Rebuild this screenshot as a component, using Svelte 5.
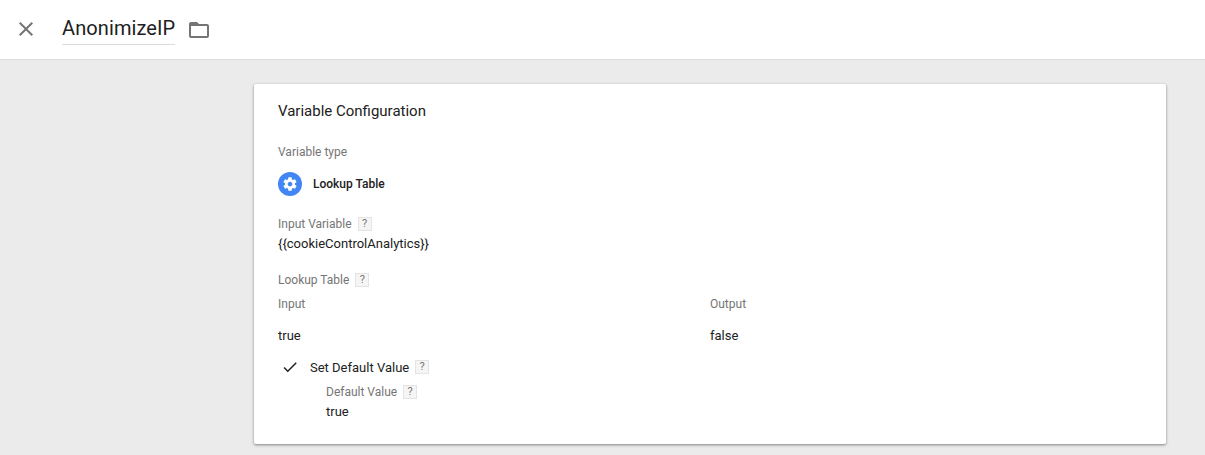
<script>
  const rows = [{ input: 'true', output: 'false' }];
</script>

<div class="page">
  <header class="bar">
    <svg class="close" width="24" height="24" viewBox="0 0 24 24"><path d="M19 6.41 17.59 5 12 10.59 6.41 5 5 6.41 10.59 12 5 17.59 6.41 19 12 13.41 17.59 19 19 17.59 13.41 12z" fill="#757575"/></svg>
    <h1 class="title">AnonimizeIP</h1>
    <svg class="folder" width="24" height="24" viewBox="0 0 24 24"><path d="M20 6h-8l-2-2H4c-1.1 0-1.99.9-1.99 2L2 18c0 1.1.9 2 2 2h16c1.1 0 2-.9 2-2V8c0-1.1-.9-2-2-2zm0 12H4V8h16v10z" fill="#757575"/></svg>
  </header>

  <main class="body">
    <section class="card">
      <h2 class="card-title">Variable Configuration</h2>

      <div class="label type-label">Variable type</div>
      <div class="type">
        <span class="type-icon">
          <svg width="16" height="16" viewBox="0 0 24 24"><path fill="#fff" d="M19.43 12.98c.04-.32.07-.64.07-.98s-.03-.66-.07-.98l2.11-1.65c.19-.15.24-.42.12-.64l-2-3.46c-.12-.22-.39-.3-.61-.22l-2.49 1c-.52-.4-1.08-.73-1.69-.98l-.38-2.65C14.46 2.18 14.25 2 14 2h-4c-.25 0-.46.18-.49.42l-.38 2.65c-.61.25-1.17.59-1.69.98l-2.49-1c-.23-.09-.49 0-.61.22l-2 3.46c-.13.22-.07.49.12.64l2.11 1.65c-.04.32-.07.65-.07.98s.03.66.07.98l-2.11 1.65c-.19.15-.24.42-.12.64l2 3.46c.12.22.39.3.61.22l2.49-1c.52.4 1.08.73 1.69.98l.38 2.65c.03.24.24.42.49.42h4c.25 0 .46-.18.49-.42l.38-2.65c.61-.25 1.17-.59 1.69-.98l2.49 1c.23.09.49 0 .61-.22l2-3.46c.12-.22.07-.49-.12-.64l-2.11-1.65zM12 15.5c-1.93 0-3.5-1.57-3.5-3.5s1.57-3.5 3.5-3.5 3.5 1.57 3.5 3.5-1.57 3.5-3.5 3.5z"/></svg>
        </span>
        <span class="type-name">Lookup Table</span>
      </div>

      <div class="label input-label">Input Variable <span class="help">?</span></div>
      <div class="value">{'{{cookieControlAnalytics}}'}</div>

      <div class="label table-label">Lookup Table <span class="help">?</span></div>
      <div class="table">
        <div class="label">Input</div>
        <div class="label">Output</div>
        {#each rows as row}
          <div class="value cell">{row.input}</div>
          <div class="value cell">{row.output}</div>
        {/each}
      </div>

      <div class="check-row">
        <svg class="check" width="18" height="18" viewBox="0 0 24 24"><path d="M9 16.17 4.83 12l-1.42 1.41L9 19 21 7l-1.41-1.41z" fill="#212121"/></svg>
        <span class="check-text">Set Default Value</span>
        <span class="help">?</span>
      </div>
      <div class="default">
        <div class="label">Default Value <span class="help">?</span></div>
        <div class="value">true</div>
      </div>
    </section>
  </main>
</div>

<style>
  :global(body) {
    margin: 0;
    background: #ebebeb;
  }

  .page {
    height: 455px;
    overflow: hidden;
    font-family: Roboto, "Liberation Sans", sans-serif;
    color: #212121;
  }

  .bar {
    height: 59px;
    background: #fff;
    border-bottom: 1px solid #dcdcdc;
    display: flex;
    align-items: center;
    padding-left: 14px;
  }

  .close {
    margin-bottom: 2px;
  }

  .title {
    margin: 0 0 2px 24px;
    font-size: 20px;
    font-weight: 400;
    line-height: 30px;
    letter-spacing: 0.1px;
    padding-bottom: 1px;
    border-bottom: 1px solid #dcdcdc;
  }

  .folder {
    margin-left: 12px;
  }

  .body {
    padding: 24px 39px 0 254px;
  }

  .card {
    background: #fff;
    height: 360px;
    border-radius: 2px;
    box-shadow: 0 1px 3px rgba(0, 0, 0, 0.45);
    padding: 0 24px;
    box-sizing: border-box;
    overflow: hidden;
  }

  .card-title {
    margin: 0;
    padding-top: 18px;
    font-size: 15px;
    font-weight: 400;
    line-height: 19px;
  }

  .label {
    font-size: 12px;
    line-height: 16px;
    color: #757575;
  }

  .value {
    font-size: 13px;
    line-height: 18px;
    color: #212121;
    margin-top: 3px;
  }

  .type-label {
    margin-top: 23px;
  }

  .type {
    display: flex;
    align-items: center;
    margin-top: 12px;
    height: 24px;
  }

  .type-icon {
    width: 24px;
    height: 24px;
    border-radius: 50%;
    background: #4285f4;
    display: flex;
    align-items: center;
    justify-content: center;
  }

  .type-name {
    margin-left: 11px;
    font-size: 12px;
    font-weight: 500;
  }

  .help {
    display: inline-block;
    width: 12px;
    height: 12px;
    margin-left: 3px;
    margin-top: 1px;
    border: 1px solid #e4e4e4;
    background: #f5f5f5;
    font-size: 11px;
    line-height: 12px;
    text-align: center;
    color: #757575;
    vertical-align: top;
  }

  .input-label {
    margin-top: 20px;
  }

  .table-label {
    margin-top: 19px;
  }

  .table {
    display: grid;
    grid-template-columns: 432px 1fr;
    margin-top: 8px;
  }

  .cell {
    margin-top: 15px;
  }

  .check-row {
    display: flex;
    align-items: center;
    margin-top: 13px;
    padding-left: 3px;
    height: 18px;
  }

  .check-text {
    margin-left: 11px;
    font-size: 13px;
  }

  .check-row .help {
    margin-left: 6px;
    margin-top: 0;
  }

  .default {
    margin-top: 8px;
    padding-left: 48px;
  }
</style>
